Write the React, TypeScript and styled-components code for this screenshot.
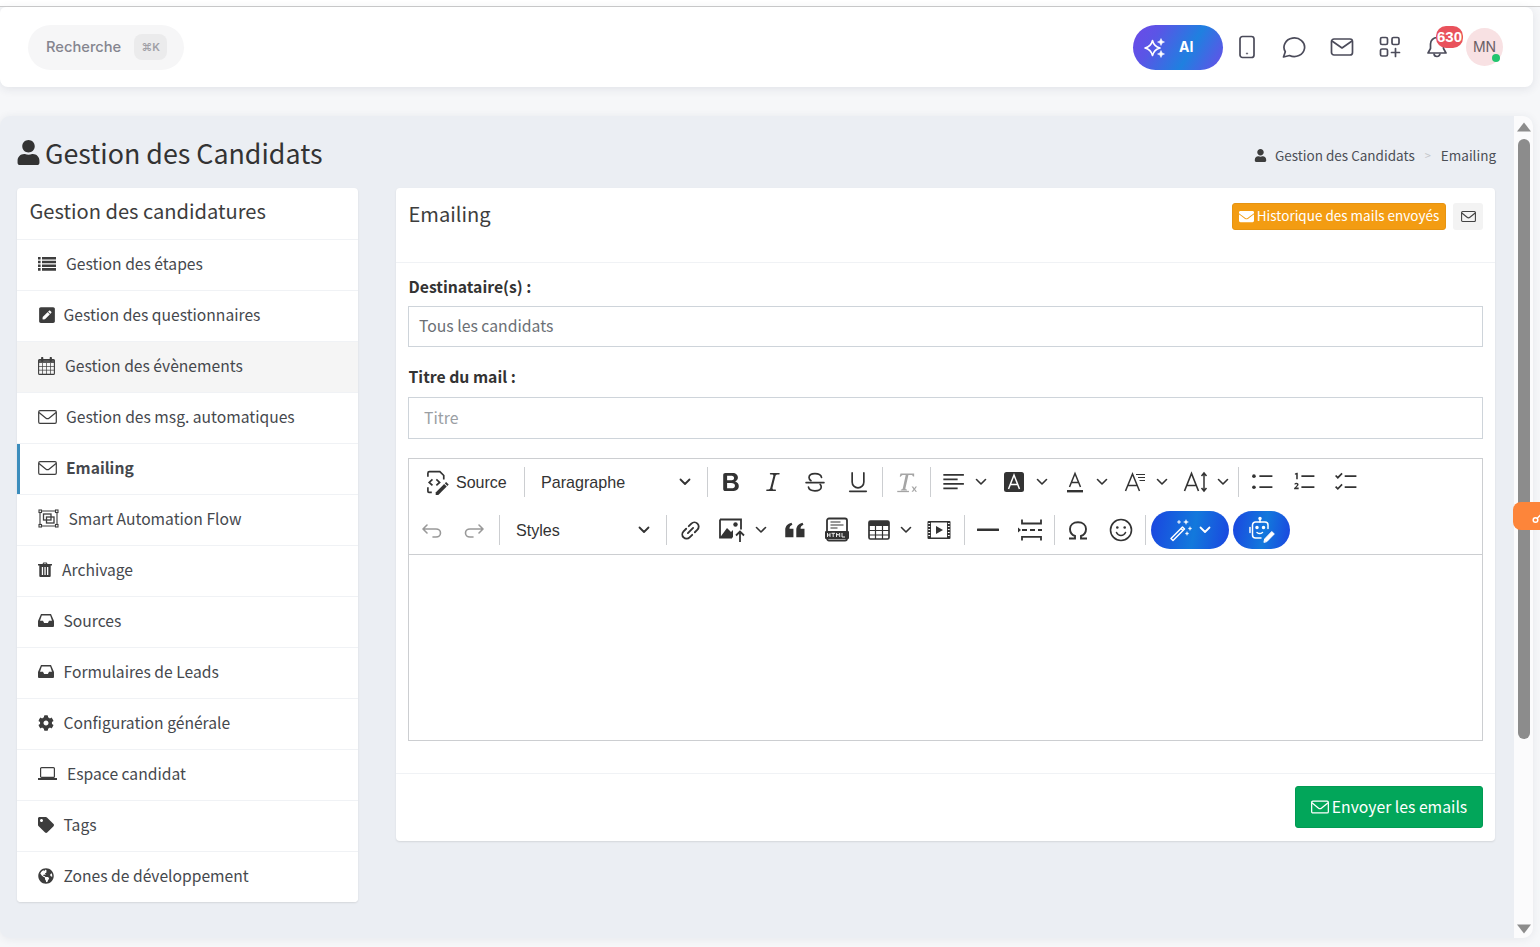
import React from 'react';
import styled, { createGlobalStyle } from 'styled-components';
import { FaUser, FaEnvelope, FaCog, FaTag, FaGlobeAmericas, FaPenSquare } from 'react-icons/fa';

const Global = createGlobalStyle`
  html, body { margin: 0; padding: 0; height: 947px; overflow: hidden; background: #f6f7f9; }
  body { font-family: "Noto Sans CJK SC", "Noto Sans", sans-serif; color: #444; }
  * { box-sizing: border-box; }
`;

const Page = styled.div`position: relative; width: 1540px; height: 947px; overflow: hidden;`;
const TopStrip = styled.div`height: 7px; background: #fff; border-bottom: 1px solid #ccc;`;
const Header = styled.header`
  width: 1533px; height: 80px; background: #fff; border-radius: 6px 8px 8px 8px;
  box-shadow: 0 2px 10px rgba(40, 50, 80, .10);
  display: flex; align-items: center; justify-content: space-between; padding: 0 30px 0 28px;
  position: relative;
`;
const SearchPill = styled.div`
  width: 156px; height: 45px; border-radius: 23px; background: #f6f6f7; display: flex; align-items: center;
  padding-left: 18px; font: 500 14.7px/20px Inter, sans-serif; color: #85858f;
`;
const Kbd = styled.span`
  margin-left: 13px; width: 33px; height: 26px; border-radius: 8px; background: #ebebec; color: #a0a0a6;
  font: 600 11px/26px Inter, "DejaVu Sans", sans-serif; text-align: center;
`;
const HeaderRight = styled.div`display: flex; align-items: center;`;
const AiPill = styled.div`
  width: 90px; height: 45px; border-radius: 23px; display: flex; align-items: center; gap: 12px; padding-left: 10px;
  background: linear-gradient(120deg, #6d49e8 0%, #5a55e6 25%, #1f80e0 62%, #6b4ce8 100%);
  color: #fff; font: 700 14px/20px Inter, sans-serif;
`;
const HeadIcon = styled.div<{ $w?: number; $pr?: number }>`
  width: ${p => p.$w ?? 48}px; padding-right: ${p => p.$pr ?? 0}px; height: 45px; display: flex; align-items: center; justify-content: center; position: relative;
`;
const Badge = styled.span`
  position: absolute; left: 22px; top: 1px; width: 27px; height: 22px; border-radius: 10px; background: #e9525c;
  color: #fff; font: 700 15px/21px "Liberation Sans", sans-serif; text-align: center; letter-spacing: 0;
`;
const Avatar = styled.div`
  position: relative; width: 37px; height: 38px; margin-left: 4px; border-radius: 50%; background: #f8e1e3;
  color: #6b5f66; font: 400 14px/38px Inter, sans-serif; text-align: center;
`;
const Dot = styled.span`
  position: absolute; right: 3px; bottom: 4px; width: 8px; height: 8px; border-radius: 50%; background: #22c56e;
`;

const Main = styled.main`
  margin-top: 29px; width: 1533px; height: 822px; display: flex; border-radius: 10px; background: #ebeef3; overflow: hidden;
  box-shadow: 0 1px 8px rgba(40, 50, 80, .08);
`;
const Content = styled.div`flex: 1; min-width: 0; padding: 0 18px 0 17px;`;
const TitleRow = styled.div`height: 72px; display: flex; justify-content: space-between; align-items: flex-start;`;
const PageTitle = styled.h1`
  margin: 18px 0 0; font-size: 26.8px; line-height: 37px; font-weight: 400; color: #333; display: flex; align-items: center; gap: 4px;
  svg { margin: -1px 0 0 -1px; }
`;
const Crumbs = styled.div`
  margin: 28px 0 0 0; font-size: 13.5px; line-height: 22px; color: #4b4f56; display: flex; align-items: center;
  svg { margin-right: 8px; }
`;
const CrumbSep = styled.span`color: #c4c6ca; margin: 0 10px; font-size: 11px;`;
const Columns = styled.div`display: flex; align-items: flex-start; gap: 38px;`;
const Side = styled.nav`
  width: 341px; height: 714px; background: #fff; border-radius: 4px; box-shadow: 0 1px 2px rgba(0,0,0,.1); overflow: hidden;
`;
const SideTitle = styled.div`
  height: 52px; padding: 7px 0 0 12.5px; font-size: 20.1px; line-height: 32px; color: #3d3d3d; border-bottom: 1px solid #f0f2f5;
`;
const Item = styled.div<{ $active?: boolean; $hover?: boolean }>`
  height: 51px; display: flex; align-items: center; padding: 0 0 3px 21px; font-size: 15.65px; line-height: 24px; color: #45484d;
  border-bottom: 1px solid #f0f2f5; position: relative;
  background: ${p => (p.$hover ? '#f5f5f5' : '#fff')};
  font-weight: ${p => (p.$active ? 600 : 400)};
  &:last-child { border-bottom: 0; }
  ${p => p.$active ? `&::before { content: ""; position: absolute; left: 0; top: 0; bottom: 0; width: 3px; background: #3c8dbc; }` : ''}
`;
const IconSlot = styled.span<{ $w: number }>`
  width: ${p => p.$w}px; flex: none; display: flex; align-items: center; color: #3d3d3d;
`;
const Card = styled.section`
  width: 1099px; height: 653px; background: #fff; border-radius: 4px; box-shadow: 0 1px 2px rgba(0,0,0,.1); display: flex; flex-direction: column;
`;
const CardHead = styled.div`
  height: 75px; border-bottom: 1px solid #f0f2f5; padding: 10px 12px 0 12.5px; display: flex; justify-content: space-between; align-items: flex-start;
`;
const CardTitle = styled.h2`margin: 0; font-size: 20.1px; line-height: 32px; font-weight: 400; color: #3d3d3d;`;
const HeadBtns = styled.div`display: flex; gap: 7px; margin-top: 5px;`;
const OrangeBtn = styled.button`
  width: 214px; height: 27px; padding: 0 0 3px; border: 1px solid #e69412; border-radius: 3px; background: #f39c12; color: #fff; white-space: nowrap;
  display: flex; align-items: center; justify-content: center; gap: 3px; font: 400 13.5px/20px "Noto Sans CJK SC", sans-serif;
  svg { margin-top: 3px; flex: none; }
`;
const GreyBtn = styled.button`
  width: 30px; height: 27px; padding: 0; border: 0; border-radius: 3px; background: #f3f3f3; color: #444;
  display: flex; align-items: center; justify-content: center;
`;
const Body = styled.div`flex: 1; padding: 13px 12px 0 12px;`;
const Label = styled.div<{ $mt?: number }>`
  margin-top: ${p => p.$mt ?? 0}px; margin-left: .5px; height: 24px; font-size: 15.75px; line-height: 22px; font-weight: 700; color: #333;
`;
const Field = styled.div<{ $h: number; $pl: number; $pb: number; $mt: number; $c: string }>`
  height: ${p => p.$h}px; margin-top: ${p => p.$mt}px; border: 1px solid #ced4da; padding: 0 0 ${p => p.$pb}px ${p => p.$pl}px; display: flex; align-items: center;
  font-size: 15.75px; color: ${p => p.$c}; background: #fff;
`;
const Editor = styled.div`margin-top: 19px; height: 283px; border: 1px solid #ccced1; display: flex; flex-direction: column;`;
const Toolbar = styled.div`height: 96px; border-bottom: 1px solid #ccced1; flex: none; display: flex; flex-direction: column; gap: 2px;`;
const TRow = styled.div<{ $pl: number }>`height: 46px; flex: none; display: flex; align-items: center; padding-left: ${p => p.$pl}px;`;
const TBtn = styled.div<{ $w?: number; $ml?: number }>`
  width: ${p => p.$w ?? 42}px; margin-left: ${p => p.$ml ?? 0}px; height: 40px; flex: none; display: flex; align-items: center; justify-content: center; color: #333;
`;
const Chev = styled.div<{ $ml?: number; $mr?: number }>`
  width: 12px; flex: none; margin-left: ${p => p.$ml ?? 0}px; margin-right: ${p => p.$mr ?? 0}px; display: flex; align-items: center; justify-content: center; color: #333;
`;
const TSep = styled.div<{ $ml: number; $mr: number }>`
  width: 1px; height: 30px; flex: none; background: #ccced1; margin-left: ${p => p.$ml}px; margin-right: ${p => p.$mr}px;
`;
const SourceBtn = styled.div`
  width: 99px; flex: none; display: flex; align-items: center; padding-left: 7px; gap: 7px; font: 400 16px/22px "Liberation Sans", sans-serif; color: #333;
  span { padding-top: 1px; margin-left: -1px; }
`;
const DropBtn = styled.div<{ $w: number }>`
  width: ${p => p.$w}px; flex: none; display: flex; align-items: center; justify-content: space-between; padding: 0 8px; font: 400 16.1px/20px "Liberation Sans", sans-serif; color: #333;
`;
const GradPill = styled.div<{ $w: number; $ml?: number }>`
  width: ${p => p.$w}px; height: 38px; margin-left: ${p => p.$ml ?? 0}px; flex: none; border-radius: 19px; color: #fff; display: flex; align-items: center; justify-content: center; gap: 6px;
  background: linear-gradient(100deg, #1b45e0 0%, #1279dc 55%, #1b45e0 100%);
`;
const EditArea = styled.div`flex: 1; background: #fff;`;
const CardFoot = styled.div`
  height: 68px; border-top: 1px solid #f0f2f5; padding: 12px 12px 0 0; display: flex; justify-content: flex-end; align-items: flex-start;
`;
const GreenBtn = styled.button`
  width: 188px; height: 42px; padding: 0; border: 1px solid #019a53; border-radius: 3px; background: #02a65a; color: #fff;
  display: flex; align-items: center; justify-content: center; gap: 3px; font: 400 15.75px/24px "Noto Sans CJK SC", sans-serif;
`;
const Scrollbar = styled.div`
  width: 19px; flex: none; background: #fbfbfc; display: flex; flex-direction: column; align-items: center; padding: 6px 0 0 1px; position: relative;
`;
const Thumb = styled.div`width: 12px; height: 600px; border-radius: 6px; background: #8c8c8c; margin-top: 7px; flex: none;`;
const ArrowDown = styled.div`margin-top: auto; margin-bottom: 4px; line-height: 0;`;
const SideTab = styled.div`
  position: absolute; left: 1513px; top: 502px; width: 27px; height: 28px; border-radius: 8px 0 0 8px; background: #fd853a; overflow: hidden;
  color: #fff; display: flex; align-items: center; padding-left: 19px;
  svg { flex: none; }
`;

const stroke = { fill: 'none', stroke: 'currentColor', strokeLinecap: 'round' as const, strokeLinejoin: 'round' as const };

const Chevron = ({ s = 1.6 }: { s?: number }) => (
  <svg width="12" height="8" viewBox="0 0 12 8" {...stroke} strokeWidth={s}><path d="M1.5 1.5 6 6l4.5-4.5" /></svg>
);
const Ck = ({ size = 26, children }: { size?: number; children: React.ReactNode }) => (
  <svg width={size} height={size} viewBox="0 0 20 20" fill="currentColor">{children}</svg>
);
const Star = ({ cx, cy, r }: { cx: number; cy: number; r: number }) => (
  <path d={`M${cx} ${cy - r}Q${cx + r * .2} ${cy - r * .2} ${cx + r} ${cy}Q${cx + r * .2} ${cy + r * .2} ${cx} ${cy + r}Q${cx - r * .2} ${cy + r * .2} ${cx - r} ${cy}Q${cx - r * .2} ${cy - r * .2} ${cx} ${cy - r}Z`} />
);
const Mail = ({ w = 19, h = 14, sw = 1.2 }: { w?: number; h?: number; sw?: number }) => (
  <svg width={w} height={h} viewBox="0 0 19 14" fill="none" stroke="currentColor" strokeWidth={sw} strokeLinejoin="round">
    <rect x=".7" y=".7" width="17.600" height="12.600" rx="1.300" />
    <path d="M1 2.500 7.700 8c1.100.9 2.500.9 3.600 0L18 2.500" />
  </svg>
);
const Inbox = () => (
  <svg width="16" height="13" viewBox="0 0 16 13" fill="currentColor" fillRule="evenodd">
    <path d="M3 0h10l3 7v5a1 1 0 0 1-1 1H1a1 1 0 0 1-1-1V7zM3.800 1.400 2 6.800h3l1.100 2.100h3.800L11 6.800h3l-1.800-5.400z" />
  </svg>
);

const sidebar: { t: string; w: number; icon: React.ReactNode; active?: boolean; hover?: boolean }[] = [
  { t: 'Gestion des étapes', w: 28, icon: (
    <svg width="18" height="14" viewBox="0 0 18 14" fill="currentColor"><path d="M0 0h2.600v2.600H0zM4 0h14v2.600H4zM0 3.700h2.600v2.600H0zM4 3.700h14v2.600H4zM0 7.400h2.600V10H0zM4 7.400h14V10H4zM0 11.100h2.600v2.600H0zM4 11.100h14v2.600H4z" /></svg>
  ) },
  { t: 'Gestion des questionnaires', w: 25.5, icon: <FaPenSquare size={18} /> },
  { t: 'Gestion des évènements', w: 27, hover: true, icon: (
    <svg width="17" height="18" viewBox="0 0 17 18"><rect x=".6" y="2.600" width="15.800" height="14.800" rx="1" fill="none" stroke="currentColor" strokeWidth="1.100" /><path d="M.6 2.600h15.800v3.400H.6z" fill="currentColor" opacity=".85" /><path d="M4.200 1v3M12.800 1v3" stroke="currentColor" strokeWidth="2.200" strokeLinecap="round" /><path d="M4.500 6v11M8.500 6v11M12.500 6v11M.6 9.500h15.800M.6 13.200h15.800" stroke="currentColor" strokeWidth=".7" /></svg>
  ) },
  { t: 'Gestion des msg. automatiques', w: 28, icon: <Mail /> },
  { t: 'Emailing', w: 28, active: true, icon: <Mail /> },
  { t: 'Smart Automation Flow', w: 30.5, icon: (
    <svg width="21" height="19" viewBox="0 0 21 19" fill="none" stroke="currentColor" strokeWidth="1.100"><path d="M2.500 2h16M2.500 17h16M2 2.500v14M19 2.500v14"/><rect x="1" y="1" width="2.500" height="2.500" fill="#fff"/><rect x="17.500" y="1" width="2.500" height="2.500" fill="#fff"/><rect x="1" y="15.500" width="2.500" height="2.500" fill="#fff"/><rect x="17.500" y="15.500" width="2.500" height="2.500" fill="#fff"/><rect x="5.500" y="5" width="7.500" height="6" strokeWidth="1.300"/><rect x="8.500" y="8" width="7.500" height="6" strokeWidth="1.300"/></svg>
  ) },
  { t: 'Archivage', w: 24, icon: (
    <svg width="14" height="15" viewBox="0 0 14 15" fill="currentColor" fillRule="evenodd"><path d="M4.500 2 5.300.6h3.400L9.500 2H14v1.400h-1.300V14a1 1 0 0 1-1 1H2.300a1 1 0 0 1-1-1V3.400H0V2zM6 1.500 5.700 2h2.600L8 1.500zM3.800 5v8h1.300V5zM6.400 5v8h1.300V5zM9 5v8h1.300V5z" /></svg>
  ) },
  { t: 'Sources', w: 25.5, icon: <Inbox /> },
  { t: 'Formulaires de Leads', w: 25.5, icon: <Inbox /> },
  { t: 'Configuration générale', w: 25.5, icon: <FaCog size={16} /> },
  { t: 'Espace candidat', w: 29, icon: (
    <svg width="19" height="13" viewBox="0 0 19 13" fill="none" stroke="currentColor"><rect x="2.600" y=".6" width="13.800" height="9.800" rx="1" strokeWidth="1.200" /><path d="M0 12h19" strokeWidth="1.800" /></svg>
  ) },
  { t: 'Tags', w: 25.5, icon: <FaTag size={16} /> },
  { t: 'Zones de développement', w: 25.5, icon: <FaGlobeAmericas size={16} /> },
];

export default function App() {
  return (
    <Page>
      <Global />
      <TopStrip />
      <Header>
        <SearchPill>Recherche<Kbd>⌘K</Kbd></SearchPill>
        <HeaderRight>
          <AiPill>
            <svg width="24" height="24" viewBox="0 0 24 24" fill="none" stroke="#fff" strokeWidth="1.600" strokeLinejoin="round">
              <Star cx={9.500} cy={13} r={7.500} />
              <path d="M18 3.500l1.100 2.400 2.400 1.100-2.400 1.100L18 10.500l-1.100-2.400L14.500 7l2.400-1.100z" fill="#fff" strokeWidth=".5" />
              <path d="M18 15.500l1.100 2.400 2.400 1.100-2.400 1.100L18 22.500l-1.100-2.400-2.400-1.100 2.400-1.100z" fill="#fff" strokeWidth=".5" />
            </svg>
            AI
          </AiPill>
          <HeadIcon>
            <svg width="18" height="24" viewBox="0 0 18 24" fill="none" stroke="#4b4b5a" strokeWidth="1.700"><rect x="2" y="1.500" width="14" height="21" rx="2.500" /><circle cx="9" cy="18.500" r=".7" fill="#4b4b5a" strokeWidth=".5" /></svg>
          </HeadIcon>
          <HeadIcon $w={47}>
            <svg width="25" height="24" viewBox="0 0 25 24" fill="none" stroke="#4b4b5a" strokeWidth="1.700" strokeLinejoin="round"><path d="M1.500 22l1.800-5.200A10.300 9.300 0 1 1 7.500 20.500z" /></svg>
          </HeadIcon>
          <HeadIcon>
            <svg width="24" height="20" viewBox="0 0 24 20" fill="none" stroke="#4b4b5a" strokeWidth="1.700" strokeLinejoin="round"><rect x="1.500" y="2" width="21" height="16" rx="2.500" /><path d="M2 4l10 7 10-7" /></svg>
          </HeadIcon>
          <HeadIcon>
            <svg width="22" height="22" viewBox="0 0 22 22" fill="none" stroke="#4b4b5a" strokeWidth="1.700" strokeLinecap="round"><rect x="1.500" y="1.500" width="7" height="7" rx="1.500" /><rect x="13" y="1.500" width="7" height="7" rx="1.500" /><rect x="1.500" y="13" width="7" height="7" rx="1.500" /><path d="M16.500 12.500v8M12.500 16.500h8" /></svg>
          </HeadIcon>
          <HeadIcon $pr={2}>
            <svg width="22" height="24" viewBox="0 0 22 24" fill="none" stroke="#4b4b5a" strokeWidth="1.700" strokeLinejoin="round"><path d="M11 2.500a6.500 6.500 0 0 0-6.500 6.500v4.500L2 18h18l-2.500-4.500V9A6.500 6.500 0 0 0 11 2.500z" /><path d="M8 18.500a3 3 0 0 0 6 0" /></svg>
            <Badge>630</Badge>
          </HeadIcon>
          <Avatar>MN<Dot /></Avatar>
        </HeaderRight>
      </Header>
      <Main>
        <Content>
          <TitleRow>
            <PageTitle><FaUser size={25} color="#333" />Gestion des Candidats</PageTitle>
            <Crumbs>
              <FaUser size={13} color="#3d3d3d" />
              Gestion des Candidats<CrumbSep>&gt;</CrumbSep>Emailing
            </Crumbs>
          </TitleRow>
          <Columns>
            <Side>
              <SideTitle>Gestion des candidatures</SideTitle>
              {sidebar.map(s => (
                <Item key={s.t} $active={s.active} $hover={s.hover}>
                  <IconSlot $w={s.w}>{s.icon}</IconSlot>{s.t}
                </Item>
              ))}
            </Side>
            <Card>
              <CardHead>
                <CardTitle>Emailing</CardTitle>
                <HeadBtns>
                  <OrangeBtn><FaEnvelope size={15} />Historique des mails envoyés</OrangeBtn>
                  <GreyBtn><Mail w={15} h={11} sw={1.400} /></GreyBtn>
                </HeadBtns>
              </CardHead>
              <Body>
                <Label>Destinataire(s) :</Label>
                <Field $h={41} $pl={10} $pb={3} $mt={6} $c="#6b6f75">Tous les candidats</Field>
                <Label $mt={19}>Titre du mail :</Label>
                <Field $h={42} $pl={15} $pb={2} $mt={7} $c="#9a9ea3">Titre</Field>
                <Editor>
                  <Toolbar>
                    <TRow $pl={8}>
                      <SourceBtn>
                        <Ck>
                          <path d="M3 6V3.200A1.200 1.200 0 0 1 4.200 2h8l3 3v3M3 14v3.200A.8.8 0 0 0 3.800 18H6" fill="none" stroke="currentColor" strokeWidth="1.300" />
                          <path d="M6.500 8 4 10.300 6.500 12.600M9.500 8 12 10.300 9.500 12.600" fill="none" stroke="currentColor" strokeWidth="1.300" />
                          <path d="M9 18l6.500-6.500 2 2L11 20H9z" />
                          <path d="M16 11l1-1 2 2-1 1z" />
                        </Ck>
                        <span>Source</span>
                      </SourceBtn>
                      <TSep $ml={8} $mr={8} />
                      <DropBtn $w={166}>Paragraphe<Chevron s={1.800} /></DropBtn>
                      <TSep $ml={8} $mr={2} />
                      <TBtn><Ck size={26}><path d="M10.187 17H5.773c-.637 0-1.092-.138-1.364-.415-.273-.277-.409-.718-.409-1.323V4.738c0-.617.14-1.062.419-1.332.279-.27.73-.406 1.354-.406h4.680c.69 0 1.288.041 1.793.124.506.083.96.242 1.360.478.341.197.644.447.906.75a3.262 3.262 0 0 1 .808 2.162c0 1.401-.722 2.426-2.167 3.075C15.050 10.175 16 11.315 16 13.010a3.756 3.756 0 0 1-2.296 3.504 6.100 6.100 0 0 1-1.517.377c-.571.073-1.238.11-2 .11zm-.217-6.217H7v4.087h3.069c1.973 0 2.960-.69 2.960-2.072 0-.707-.245-1.220-.735-1.537-.49-.319-1.230-.478-2.224-.478zM7 5.130v3.619h2.606c.709 0 1.257-.067 1.645-.2a1.587 1.587 0 0 0 .89-.76c.15-.257.225-.543.225-.858 0-.674-.24-1.122-.72-1.344-.48-.223-1.212-.334-2.196-.334H7z" /></Ck></TBtn>
                      <TBtn><Ck><path d="M9.586 14.633l.021.004c-.036.335.095.655.393.962.082.083.173.15.274.201h1.474a.6.6 0 1 1 0 1.200H5.304a.6.6 0 0 1 0-1.200h1.150c.474-.07.809-.182 1.005-.334.157-.122.291-.32.404-.597l2.416-9.550a1.053 1.053 0 0 0-.281-.823 1.120 1.120 0 0 0-.442-.296H8.150a.6.6 0 0 1 0-1.200h6.443a.6.6 0 1 1 0 1.200h-1.195c-.376.056-.65.155-.823.296-.215.175-.423.439-.623.79l-2.366 9.347z" /></Ck></TBtn>
                      <TBtn><Ck><path d="M15 6.500c-.3-1.800-2.200-3-5-3-2.700 0-4.600 1.200-4.600 3 0 1 .5 1.800 1.500 2.500M5 14c.3 1.700 2.200 2.800 5 2.800 2.900 0 4.800-1.200 4.800-3 0-.8-.3-1.500-.8-2" fill="none" stroke="currentColor" strokeWidth="1.300" strokeLinecap="round" /><rect x="2.500" y="9.800" width="15" height="1.300" rx=".6" /></Ck></TBtn>
                      <TBtn $w={43}><Ck><path d="M5.500 3v7a4.500 4.500 0 0 0 9 0V3" fill="none" stroke="currentColor" strokeWidth="1.300" strokeLinecap="round" /><rect x="3" y="16.500" width="14" height="1.300" rx=".6" /></Ck></TBtn>
                      <TSep $ml={3} $mr={3} />
                      <TBtn><Ck><g fill="#a5a5a5"><path d="M5 3.500h10.500v2.200l-.9.1c-.2-.8-.4-1.200-1.500-1.200h-2l-2.300 10.200c-.1.700.3 1 1.200 1v.7H5.300v-.7c.8 0 1.400-.3 1.500-1L9 4.600H7.400c-1.200 0-1.800.4-2.200 1.300L4.400 5.700z" /><rect x="2.500" y="16.800" width="9" height="1" /><path d="M13.500 13.500h1.200l.9 1.300.9-1.300h1.200l-1.500 2 1.500 2h-1.200l-.9-1.300-.9 1.300h-1.200l1.500-2z" /></g></Ck></TBtn>
                      <TSep $ml={2} $mr={2} />
                      <TBtn><Ck><path d="M1.800 3.800h15.800v1.300H1.800zM1.800 7.300h11v1.300h-11zM1.800 10.800h15.800v1.300H1.800zM1.800 14.300h11v1.300h-11z" /></Ck></TBtn>
                      <Chev $mr={6}><Chevron /></Chev>
                      <TBtn><svg width="22" height="22" viewBox="0 0 22 22"><rect x="1" y="1" width="20" height="20" rx="2.500" fill="#333" /><path d="M5.500 18 11 4l5.500 14M7.300 13.500h7.400" fill="none" stroke="#fff" strokeWidth="1.500" /></svg></TBtn>
                      <Chev $ml={1} $mr={6}><Chevron /></Chev>
                      <TBtn><svg width="22" height="24" viewBox="0 0 22 24" fill="none" stroke="#333" strokeWidth="1.500"><path d="M5.500 17 11 3.500 16.500 17M7.500 12.500h7" /><rect x="3" y="20" width="16" height="2.400" fill="#333" strokeWidth="0" /></svg></TBtn>
                      <Chev $mr={6}><Chevron /></Chev>
                      <TBtn><svg width="24" height="24" viewBox="0 0 24 24" fill="none" stroke="#333" strokeWidth="1.500"><path d="M2.500 21 9.500 4 16.500 21M5 15.500h9.500" /><path d="M13 4.500h9M15 7.500h7M16.500 10.500h5.500" strokeWidth="1.200" /></svg></TBtn>
                      <Chev $mr={7}><Chevron /></Chev>
                      <TBtn><svg width="26" height="24" viewBox="0 0 26 24" fill="none" stroke="#333" strokeWidth="1.600"><path d="M1.500 21 8.500 3.500 15.500 21M4 15.500h9" /><path d="M21 3v18M18.500 6 21 3l2.500 3M18.500 18l2.500 3 2.500-3" strokeWidth="1.500" /></svg></TBtn>
                      <Chev $mr={9}><Chevron /></Chev>
                      <TSep $ml={0} $mr={2} />
                      <TBtn><Ck><circle cx="3.800" cy="5.500" r="1.400" /><circle cx="3.800" cy="14" r="1.400" /><path d="M8 4.800h10v1.300H8zM8 13.300h10v1.300H8z" /></Ck></TBtn>
                      <TBtn><Ck><path d="M3 3.500l1.500-.6h.7v5H4V4.200l-1 .3zM2.500 11.500c.4-.6 1-.9 1.700-.9 1 0 1.600.6 1.600 1.400 0 .7-.5 1.200-1.800 2.300h1.900V15.500H2.400v-.8c1.500-1.300 2.200-2 2.200-2.600 0-.4-.2-.6-.6-.6-.3 0-.6.2-.9.6z" /><path d="M8 4.800h10v1.300H8zM8 13.300h10v1.300H8z" /></Ck></TBtn>
                      <TBtn><Ck><path d="M2 5l1.700 1.700L7 3.400M2 13.500l1.700 1.700L7 11.900" fill="none" stroke="currentColor" strokeWidth="1.300" /><path d="M9 4.800h9v1.300H9zM9 13.300h9v1.300H9z" /></Ck></TBtn>
                    </TRow>
                    <TRow $pl={2}>
                      <TBtn><svg width="24" height="24" viewBox="0 0 24 24" fill="none" stroke="#999" strokeWidth="1.600" strokeLinecap="round" strokeLinejoin="round"><path d="M7 7 3 11l4 4M3.500 11H16c2.700 0 4.500 1.800 4.500 4s-1.800 4-4.500 4h-3" /></svg></TBtn>
                      <TBtn><svg width="24" height="24" viewBox="0 0 24 24" fill="none" stroke="#999" strokeWidth="1.600" strokeLinecap="round" strokeLinejoin="round"><path d="M17 7l4 4-4 4M20.500 11H8c-2.700 0-4.500 1.800-4.500 4s1.800 4 4.500 4h3" /></svg></TBtn>
                      <TSep $ml={4} $mr={8} />
                      <DropBtn $w={150}>Styles<Chevron s={1.800} /></DropBtn>
                      <TSep $ml={8} $mr={2} />
                      <TBtn><svg width="27" height="27" viewBox="0 0 22 22" fill="none" stroke="#333" strokeWidth="1.500" strokeLinecap="round"><g transform="rotate(-45 11 11)"><path d="M9.500 7.500H6.500a3.500 3.500 0 0 0 0 7h3" /><path d="M12.500 7.500h3a3.500 3.500 0 0 1 0 7h-3" /><path d="M8 11h6" /></g></svg></TBtn>
                      <TBtn><svg width="27" height="26" viewBox="0 0 27 26"><path d="M1 2.500h21v10M1 2.500v18h12" fill="none" stroke="#333" strokeWidth="1.800" /><path d="M1 20.500 8 11l4 4 2 -2v7.500H1z" fill="#333" /><circle cx="16.500" cy="7.500" r="2.200" fill="#333" /><path d="M21 25v-10M17 18.500l4-4 4 4" fill="none" stroke="#333" strokeWidth="1.800" /></svg></TBtn>
                      <Chev $ml={2} $mr={7}><Chevron /></Chev>
                      <TBtn><Ck><path d="M2.500 15.500V10c0-2.800 1.800-4.700 4.800-5.500l.7 1.400C6.500 6.500 5.700 7.500 5.800 9h3v6.500zM11 15.500V10c0-2.800 1.800-4.700 4.800-5.500l.7 1.400C15 6.500 14.200 7.500 14.300 9h3v6.500z" /></Ck></TBtn>
                      <TBtn><svg width="26" height="26" viewBox="0 0 26 26"><rect x="3" y="1.500" width="20" height="22" rx="2" fill="none" stroke="#333" strokeWidth="1.800" /><path d="M6.500 5h10M6.500 8h13M6.500 11h7" stroke="#333" strokeWidth="1.200" /><rect x="1" y="14" width="24" height="8" rx="1" fill="#333" /><path d="M3.500 16v4M6 16v4M3.500 18H6M7.500 16.300h3.500M9.200 16.300V20M12.500 20v-3.700l1.600 2 1.600-2V20M18 16v4h3" fill="none" stroke="#fff" strokeWidth=".9" /></svg></TBtn>
                      <TBtn><svg width="22" height="20" viewBox="0 0 22 20"><rect x="1" y="1" width="20" height="18" rx="1.500" fill="none" stroke="#333" strokeWidth="1.700" /><rect x="1" y="1" width="20" height="5" fill="#333" /><path d="M7.500 6v13M14.500 6v13M1 10.500h20M1 15h20" stroke="#333" strokeWidth="1.200" /></svg></TBtn>
                      <Chev $mr={6}><Chevron /></Chev>
                      <TBtn><svg width="24" height="20" viewBox="0 0 24 20"><rect x=".5" y="1" width="23" height="18" rx="1" fill="#333" /><rect x="4" y="2.500" width="16" height="15" fill="#fff" /><path d="M9 6l7 4-7 4z" fill="#333" /><path d="M1.300 3.500h1.800M1.300 6.500h1.800M1.300 9.500h1.800M1.300 12.500h1.800M1.300 15.500h1.800M20.900 3.500h1.800M20.900 6.500h1.800M20.900 9.500h1.800M20.900 12.500h1.800M20.900 15.500h1.800" stroke="#fff" strokeWidth="1" /></svg></TBtn>
                      <TSep $ml={4} $mr={2} />
                      <TBtn><svg width="22" height="4" viewBox="0 0 22 4"><rect y=".5" width="22" height="2.600" rx=".5" fill="#333" /></svg></TBtn>
                      <TBtn $ml={1}><svg width="26" height="24" viewBox="1 0 26 24" fill="none" stroke="#333" strokeWidth="1.800"><path d="M5 6.500V1.500M24 1.500v5M5 5.500h19M5 22.500V18M24 22.500V18M5 18.800h19" /><path d="M5 12h5M13 12h5M21 12h4" strokeWidth="1.800" /><path d="M1 9.500 4 12l-3 2.500z" fill="#333" strokeWidth="0" /></svg></TBtn>
                      <TSep $ml={2} $mr={2} />
                      <TBtn><svg width="24" height="24" viewBox="0 0 24 24" fill="none" stroke="#333" strokeWidth="1.900"><path d="M3 20.500h6v-2.500c-3-1-5-3.500-5-7 0-4 3.200-6.800 8-6.800s8 2.800 8 6.800c0 3.500-2 6-5 7v2.500h6" /></svg></TBtn>
                      <TBtn $ml={1}><svg width="24" height="24" viewBox="0 0 24 24" fill="none" stroke="#333" strokeWidth="1.600" strokeLinecap="round"><circle cx="12" cy="12" r="10.500" /><circle cx="8.300" cy="9.500" r="1.300" fill="#333" strokeWidth="0" /><circle cx="15.700" cy="9.500" r="1.300" fill="#333" strokeWidth="0" /><path d="M7.500 14.500c1 2 2.600 3 4.500 3s3.500-1 4.500-3" /></svg></TBtn>
                      <TSep $ml={3} $mr={5} />
                      <GradPill $w={78}>
                        <svg width="24" height="24" viewBox="0 0 24 24" fill="none" stroke="#fff" strokeWidth="1.500" strokeLinejoin="round"><path d="M2 20.500 13.500 9l2 2L4 22.500z" /><path d="M12 10.500l2 2" /><path d="M17 1.500l.7 1.800 1.800.7-1.800.7L17 6.500l-.7-1.800-1.800-.7 1.800-.7zM21 8.500l.6 1.400 1.400.6-1.400.6-.6 1.400-.6-1.400-1.400-.6 1.400-.6zM10 2l.6 1.400L12 4l-1.400.6L10 6l-.6-1.400L8 4l1.400-.6zM18 13.500l.6 1.400 1.400.6-1.400.6-.6 1.400-.6-1.400-1.400-.6 1.400-.6z" fill="#fff" strokeWidth=".3" /></svg>
                        <Chevron s={1.800} />
                      </GradPill>
                      <GradPill $w={57} $ml={4}>
                        <svg width="28" height="28" viewBox="0 0 28 28" fill="none" stroke="#fff" strokeWidth="1.500" strokeLinecap="round" strokeLinejoin="round"><path d="M12 2.500v3.500" /><circle cx="12" cy="2.500" r="1" fill="#fff" /><path d="M20 12.500V9a3 3 0 0 0-3-3H7.500a3 3 0 0 0-3 3v10a3 3 0 0 0 3 3H13" /><path d="M2 11.500v5" /><circle cx="9" cy="11.500" r="1" fill="#fff" /><circle cx="15.500" cy="11.500" r="1" fill="#fff" /><path d="M9 16.500c1.600 1.300 3.800 1.300 5.500 0" /><path d="M16 26l.6-3 7.200-7.500 2.500 2.500-7.300 7.400z" fill="#fff" strokeWidth="1" /></svg>
                      </GradPill>
                    </TRow>
                  </Toolbar>
                  <EditArea />
                </Editor>
              </Body>
              <CardFoot>
                <GreenBtn><Mail w={18} h={14} sw={1.300} />Envoyer les emails</GreenBtn>
              </CardFoot>
            </Card>
          </Columns>
        </Content>
        <Scrollbar>
          <svg width="14" height="10" viewBox="0 0 14 10"><path d="M7 .5l7 9H0z" fill="#8c8c8c" /></svg>
          <Thumb />
          <ArrowDown><svg width="14" height="10" viewBox="0 0 14 10"><path d="M7 9.500 0 .5h14z" fill="#8c8c8c" /></svg></ArrowDown>
        </Scrollbar>
      </Main>
      <SideTab>
        <svg width="15" height="15" viewBox="0 0 15 15" fill="none" stroke="#fff" strokeWidth="1.500"><circle cx="3.500" cy="11" r="2.300" /><path d="M5.500 9l4-4" /><circle cx="11" cy="3.500" r="2.300" /></svg>
      </SideTab>
    </Page>
  );
}
